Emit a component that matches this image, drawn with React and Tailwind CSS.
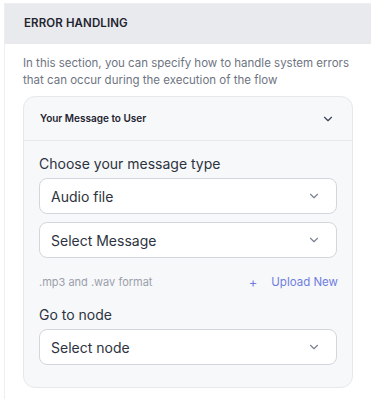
import React from "react";

const Chevron = ({ className = "" }) => (
  <svg viewBox="0 0 24 24" width="14" height="14" fill="none" stroke="currentColor" strokeWidth="2" strokeLinecap="round" strokeLinejoin="round" className={className}>
    <path d="M6 9l6 6 6-6" />
  </svg>
);

const Select = ({ label }) => (
  <div className="flex h-[36px] items-center justify-between rounded-lg border border-[#d4d6dd] bg-white pl-[11px] pr-[15px]">
    <span className="text-[14px] text-[#2d3340]">{label}</span>
    <Chevron className="text-[#7b8394]" />
  </div>
);

export default function App() {
  return (
    <div className="h-[399px] w-[371px] bg-white pl-[4px] pt-[3px]" style={{ fontFamily: "Inter, 'Liberation Sans', sans-serif" }}>
      <div className="h-full border-l border-t border-[#eceef2]">
        <div className="flex h-[40px] items-center bg-[#e9eaee] pl-[19px]">
          <span className="text-[11.5px] font-semibold tracking-[0.01em] text-[#1f2430]">ERROR HANDLING</span>
        </div>
        <div className="px-[18px] pt-[11px]">
          <p className="pr-[4px] text-[11.5px] leading-[17px] text-[#6e7482]">
            In this section, you can specify how to handle system errors that can occur during the execution of the flow
          </p>
          <div className="mt-[7px] w-[330px] overflow-hidden rounded-xl border border-[#e6e8ec] bg-[#f7f8fa]">
            <div className="flex h-[44px] items-center justify-between border-b border-[#e6e8ec] pl-[16px] pr-[17px]">
              <span className="text-[10px] font-semibold text-[#1f2430]">Your Message to User</span>
              <Chevron className="text-[#3b4255]" />
            </div>
            <div className="px-[15px] pb-[22px] pt-[14px]">
              <div className="text-[14px] leading-[18px] text-[#2d3340]">Choose your message type</div>
              <div className="mt-[5px] flex flex-col gap-[8px]">
                <Select label="Audio file" />
                <Select label="Select Message" />
              </div>
              <div className="mt-[16px] flex items-center justify-between">
                <span className="text-[11px] text-[#9aa0ab]">.mp3 and .wav format</span>
                <span className="-mr-[1px] flex items-center gap-[14px] text-[11.5px] text-[#6f7ee0]">
                  <span className="text-[13px] leading-none">+</span>
                  <span>Upload New</span>
                </span>
              </div>
              <div className="mt-[15px] text-[14px] leading-[18px] text-[#2d3340]">Go to node</div>
              <div className="mt-[5px]">
                <Select label="Select node" />
              </div>
            </div>
          </div>
        </div>
      </div>
    </div>
  );
}
